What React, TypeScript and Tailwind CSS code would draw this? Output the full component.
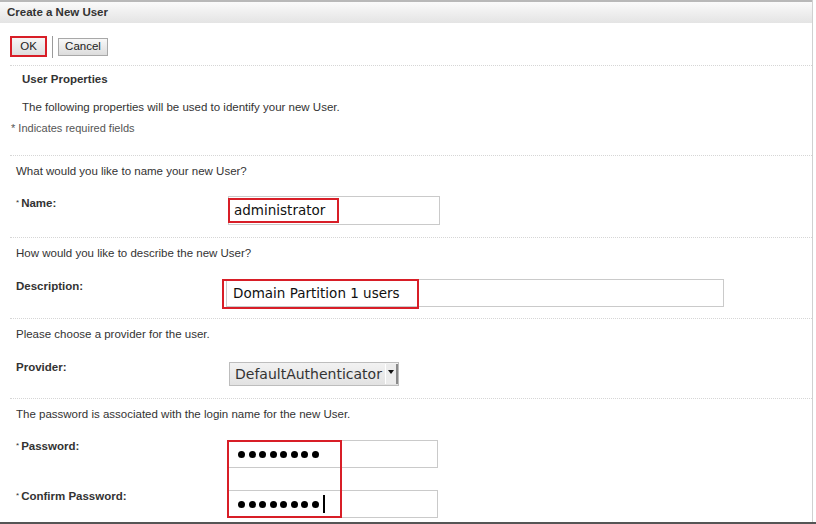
import React from "react";

const mono = { fontFamily: '"DejaVu Sans", sans-serif' };

function Dots({ n, cursor }: { n: number; cursor?: boolean }) {
  return (
    <div className="flex items-center gap-[3.5px]">
      {Array.from({ length: n }).map((_, i) => (
        <span key={i} className="h-[7px] w-[7px] rounded-full bg-black" />
      ))}
      {cursor && <span className="ml-[1px] h-[18px] w-[2px] bg-black" />}
    </div>
  );
}

function Section({ question, children }: { question: string; children: React.ReactNode }) {
  return (
    <div className="ml-[10px] border-t border-dotted border-[#d6d6d6]">
      <div className="pl-[6px] pt-[8px] text-[11.5px] leading-[14px] text-[#333]">{question}</div>
      {children}
    </div>
  );
}

function Label({ text, required, top = 0 }: { text: string; required?: boolean; top?: number }) {
  return (
    <div
      className="w-[218px] shrink-0 pl-[6px] text-[11.5px] font-bold leading-[14px] text-[#333]"
      style={{ marginTop: top }}
    >
      {required && <span className="mr-[2px] align-top text-[8px] font-normal">*</span>}
      {text}
    </div>
  );
}

export default function App() {
  return (
    <div
      className="h-[524px] w-[816px] overflow-hidden bg-white"
      style={{ fontFamily: '"Liberation Sans", Arial, sans-serif' }}
    >
      <div className="mr-[3px] border-r border-[#d0d0d0]">
        {/* title bar */}
        <div className="flex h-[23px] items-center border-t-2 border-[#b8b8b8] bg-gradient-to-b from-[#fafafa] to-[#e4e4e4] pl-[7px] text-[11.5px] font-bold text-[#333]">
          Create a New User
        </div>

        {/* toolbar */}
        <div className="flex h-[42px] items-center pl-[10px] pt-[5px]">
          <div className="flex h-[21px] w-[37px] items-center justify-center border-2 border-[#d81e27] bg-gradient-to-b from-[#f6f6f6] to-[#dedede] text-[11.5px] text-[#222]">
            OK
          </div>
          <div className="mx-[5px] h-[22px] w-px bg-[#9a9a9a]" />
          <div className="flex h-[18px] w-[50px] items-center justify-center border border-[#a8a8a8] bg-gradient-to-b from-[#f8f8f8] to-[#dcdcdc] text-[11.5px] text-[#222]">
            Cancel
          </div>
        </div>

        <div className="ml-[10px] border-t border-dotted border-[#d6d6d6]">
          <div className="pl-[12px] pt-[6px] text-[11.5px] font-bold leading-[14px] text-[#333]">User Properties</div>
          <div className="pl-[12px] pt-[14px] text-[11.5px] leading-[14px] text-[#333]">
            The following properties will be used to identify your new User.
          </div>
          <div className="pl-px pt-[7px] pb-[20px] text-[11px] leading-[14px] text-[#555]">
            * Indicates required fields
          </div>
        </div>

        <Section question="What would you like to name your new User?">
          <div className="flex pt-[18px] pb-[12px]">
            <Label text="Name:" required />
            <div className="relative h-[29px] w-[212px] border border-[#cacaca]">
              <div className="absolute left-[-1px] top-[1px] h-[25px] w-[111px] border-2 border-[#d81e27]" />
              <div className="absolute left-[5px] top-[5px] text-[13.5px] leading-[17px] text-[#111]" style={mono}>
                administrator
              </div>
            </div>
          </div>
        </Section>

        <Section question="How would you like to describe the new User?">
          <div className="flex pt-[19px] pb-[11px]">
            <Label text="Description:" />
            <div className="relative ml-[-2px] h-[28px] w-[498px] border border-[#cacaca]">
              <div className="absolute left-[-5px] top-[-1px] h-[30px] w-[197px] border-2 border-[#d81e27]" />
              <div className="absolute left-[6px] top-[4px] text-[13.5px] leading-[18px] text-[#111]" style={mono}>
                Domain Partition 1 users
              </div>
            </div>
          </div>
        </Section>

        <Section question="Please choose a provider for the user.">
          <div className="flex pt-[21px] pb-[12px]">
            <Label text="Provider:" top={-2} />
            <div className="ml-[1px] flex h-[24px] w-[170px] items-stretch border border-[#bdbdbd] bg-gradient-to-b from-[#f2f2f2] to-[#e2e2e2]">
              <div className="flex flex-1 items-center pl-[5px] text-[14px] text-[#333]" style={mono}>
                DefaultAuthenticator
              </div>
              <div className="my-[1px] flex w-[13px] justify-center border-l border-r-2 border-l-[#ffffff] border-r-[#8a8a8a] bg-[#ececec] pt-[6px]">
                <svg width="6" height="4" viewBox="0 0 6 4">
                  <path d="M0 0 L6 0 L3 4 Z" fill="#111" />
                </svg>
              </div>
            </div>
          </div>
        </Section>

        <Section question="The password is associated with the login name for the new User.">
          <div className="relative pt-[19px] pb-[4px]">
            <div className="flex">
              <Label text="Password:" required top={-1} />
              <div className="flex h-[28px] w-[210px] items-center border border-[#cacaca] pl-[9px]">
                <Dots n={8} />
              </div>
            </div>
            <div className="mt-[22px] flex">
              <Label text="Confirm Password:" required top={-1} />
              <div className="flex h-[28px] w-[210px] items-center border border-[#cacaca] pl-[9px]">
                <Dots n={8} cursor />
              </div>
            </div>
            <div className="absolute left-[217px] top-[19px] h-[78px] w-[115px] border-2 border-[#d81e27]" />
          </div>
        </Section>
      </div>
      <div className="h-[2px] bg-[#555]" />
    </div>
  );
}
